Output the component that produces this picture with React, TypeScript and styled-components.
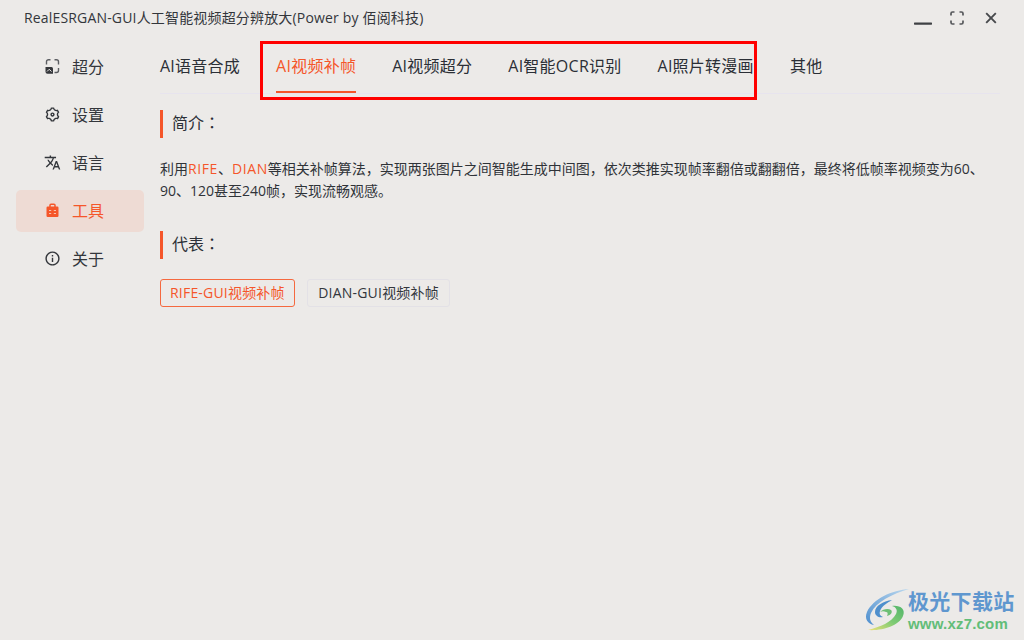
import { FC, ReactNode } from 'react';
import styled, { createGlobalStyle } from 'styled-components';
import { MdTranslate } from 'react-icons/md';
import { RiInformationLine, RiSettings3Line } from 'react-icons/ri';

const accent = '#f5562a';

const GlobalStyle = createGlobalStyle`
    html, body {
        margin: 0;
        padding: 0;
        background: #ecEAe8;
    }
    body {
        font-family: "Open Sans", "Noto Sans CJK SC", sans-serif;
        color: #2b2f36;
    }
`;

const Page = styled.div`
    position: relative;
    width: 1024px;
    height: 640px;
    overflow: hidden;
    background: #ecEAe8;
`;

const TitleBar = styled.header`
    display: flex;
    align-items: center;
    justify-content: space-between;
    height: 36px;
    padding: 0 27px 0 24px;
`;

const Title = styled.div`
    font-size: 14px;
    line-height: 32px;
    letter-spacing: 0.17px;
    color: #33363b;
`;

const WindowControls = styled.div`
    display: flex;
    align-items: center;
    gap: 18px;
`;

const WindowButton = styled.span<{ $width: number }>`
    display: block;
    width: ${(p) => p.$width}px;
    height: 16px;
    line-height: 0;
`;

const MaximizeButton = styled(WindowButton)`
    padding-top: 1px;
    height: 15px;
`;

const CloseButton = styled(WindowButton)`
    margin-left: 3px;
`;

const Body = styled.div`
    display: flex;
    padding: 7px 24px 0 16px;
`;

const Sidebar = styled.nav`
    display: flex;
    flex-direction: column;
    gap: 6px;
    width: 128px;
    flex: none;
    padding-top: 3px;
`;

const SideItem = styled.div<{ $active?: boolean }>`
    display: flex;
    align-items: center;
    gap: 11px;
    box-sizing: border-box;
    height: 42px;
    padding: 0 0 2px 28px;
    border-radius: 5px;
    font-size: 16px;
    color: ${(p) => (p.$active ? accent : '#33363b')};
    background: ${(p) => (p.$active ? '#eedbd4' : 'transparent')};
    & svg {
        flex: none;
        width: 17px;
        height: 17px;
    }
`;

const Content = styled.main`
    flex: 1;
    margin-left: 16px;
`;

const Tabs = styled.div`
    display: flex;
    gap: 36px;
    height: 50px;
    border-bottom: 1px solid #e7e4ee;
`;

const Tab = styled.div<{ $active?: boolean }>`
    height: 50px;
    box-sizing: border-box;
    font-size: 16px;
    line-height: 46px;
    letter-spacing: 0.25px;
    white-space: nowrap;
    color: ${(p) => (p.$active ? accent : '#2b2f36')};
    border-bottom: 2px solid ${(p) => (p.$active ? accent : 'transparent')};
`;

const Heading = styled.h2`
    height: 28px;
    margin: 16px 0 0;
    padding-left: 9px;
    border-left: 3px solid ${accent};
    font-size: 16px;
    font-weight: 400;
    line-height: 25px;
    color: #2b2f36;
`;

const Colon = styled.span`
    font-family: "Noto Sans CJK TC", sans-serif;
`;

const Paragraph = styled.p`
    margin: 20px 0 0;
    font-size: 14px;
    line-height: 22px;
    color: #2f3338;
`;

const Mark = styled.span`
    letter-spacing: 0.6px;
    color: ${accent};
`;

const SecondHeading = styled(Heading)`
    margin-top: 29px;
`;

const TagRow = styled.div`
    display: flex;
    gap: 12px;
    margin-top: 20px;
`;

const Tag = styled.div<{ $active?: boolean }>`
    box-sizing: border-box;
    height: 28px;
    padding: 0 ${(p) => (p.$active ? '9px' : '10.5px')};
    border: 1px solid ${(p) => (p.$active ? '#f5693f' : '#e3e1e6')};
    border-radius: 3px;
    font-size: 14px;
    line-height: 26px;
    letter-spacing: 0.2px;
    color: ${(p) => (p.$active ? accent : '#33373d')};
`;

const Annotation = styled.div`
    position: absolute;
    left: 260px;
    top: 41px;
    width: 497px;
    height: 59px;
    box-sizing: border-box;
    border: 3px solid #ff0000;
    pointer-events: none;
`;

const Watermark = styled.div`
    position: absolute;
    left: 864px;
    top: 588px;
    display: flex;
    align-items: flex-start;
    gap: 0;
`;

const WatermarkText = styled.div`
    display: flex;
    flex-direction: column;
    margin-left: -2px;
`;

const WatermarkName = styled.div`
    font-family: "Noto Sans CJK SC", sans-serif;
    font-size: 21px;
    font-weight: 700;
    line-height: 25px;
    letter-spacing: 0.3px;
    color: #5f97cf;
`;

const WatermarkUrl = styled.div`
    font-family: "Liberation Sans", Arial, sans-serif;
    font-size: 15px;
    font-weight: 700;
    line-height: 21px;
    letter-spacing: 0.2px;
    color: #62bd78;
`;

const SuperIcon = () => (
    <svg viewBox="0 0 17 17" fill="none">
        <path
            d="M6.5 1.7H4.5a2 2 0 0 0-2 2V6.5M10.5 1.7h2a2 2 0 0 1 2 2V6.5M14.5 10v2.5a2 2 0 0 1-2 2H10.5"
            stroke="#5c5e62"
            strokeWidth="1.4"
        />
        <path d="M1.5 9h6a1.5 1.5 0 0 1 1.5 1.5v5.2H3.5a2 2 0 0 1-2-2z" fill="#35373b" />
        <path d="M3 13.5l2.2-2.2 2.3 2.2" stroke="#ecEAe8" strokeWidth="1" />
    </svg>
);

const ToolboxIcon = () => (
    <svg viewBox="0 0 17 17">
        <path d="M6 5V3.3a1 1 0 0 1 1-1h3a1 1 0 0 1 1 1V5" fill="none" stroke={accent} strokeWidth="1.5" />
        <rect x="2.5" y="4.5" width="12" height="10.5" rx="1.2" fill={accent} />
        <path d="M5 8.5h2.2M9.8 8.5h2.2M5 11.5h2.2M9.8 11.5h2.2" stroke="#f6c3b0" strokeWidth="1.2" />
    </svg>
);

const MinimizeIcon = () => (
    <svg width="18" height="16" viewBox="0 0 18 16">
        <rect x="0" y="12.5" width="18" height="2.2" rx="0.6" fill="#3f4144" />
    </svg>
);

const MaximizeIcon = () => (
    <svg width="14" height="14" viewBox="0 0 14 14" fill="none" stroke="#55575a" strokeWidth="1.7">
        <path d="M1 4.5V2.5A1.5 1.5 0 0 1 2.5 1h2M9.5 1h2A1.5 1.5 0 0 1 13 2.5v2M13 9.5v2a1.5 1.5 0 0 1-1.5 1.5h-2M4.5 13h-2A1.5 1.5 0 0 1 1 11.5v-2" />
    </svg>
);

const CloseIcon = () => (
    <svg width="12" height="16" viewBox="0 0 12 16" fill="none" stroke="#47494c" strokeWidth="1.9">
        <path d="M1.2 3.2l9.6 9.6M10.8 3.2l-9.6 9.6" />
    </svg>
);

const LogoSwoosh = () => (
    <svg width="46" height="44" viewBox="0 0 46 44">
        <defs>
            <linearGradient id="swooshBlue" x1="0" y1="1" x2="1" y2="0">
                <stop offset="0" stopColor="#4e8fcf" />
                <stop offset="1" stopColor="#bcd8ee" />
            </linearGradient>
            <linearGradient id="swooshGreen" x1="0" y1="1" x2="1" y2="0">
                <stop offset="0" stopColor="#efe27a" />
                <stop offset="0.5" stopColor="#7fcb74" />
                <stop offset="1" stopColor="#52b56b" />
            </linearGradient>
        </defs>
        <path d="M45 1C28 2 9 11 3 24c-3 7 1 12 7 13-4-3-5-7-3-12C12 14 28 6 45 1z" fill="url(#swooshBlue)" />
        <path d="M28 12c-9 1-17 6-17 12 0 4 4 6 8 5-3-1-4-3-3-6 2-5 7-8 12-11z" fill="#4f8fcc" />
        <path d="M4 42c14 1 31-4 35-14 3-7-3-11-11-10 4 1 6 4 4 8-4 8-16 13-28 16z" fill="url(#swooshGreen)" />
        <path d="M16 24c3-3 8-4 11-2 2 2 0 5-4 6 1-2 1-4-1-4-2-1-4-1-6 0z" fill="#6dbf74" />
    </svg>
);

type NavEntry = { readonly label: string; readonly icon: ReactNode; readonly active?: boolean };

const navEntries: NavEntry[] = [
    { label: '超分', icon: <SuperIcon /> },
    { label: '设置', icon: <RiSettings3Line /> },
    { label: '语言', icon: <MdTranslate /> },
    { label: '工具', icon: <ToolboxIcon />, active: true },
    { label: '关于', icon: <RiInformationLine /> },
];

const tabs = ['AI语音合成', 'AI视频补帧', 'AI视频超分', 'AI智能OCR识别', 'AI照片转漫画', '其他'];

const App: FC = () => (
    <Page>
        <GlobalStyle />
        <TitleBar>
            <Title>RealESRGAN-GUI人工智能视频超分辨放大(Power by 佰阅科技)</Title>
            <WindowControls>
                <WindowButton $width={18}>
                    <MinimizeIcon />
                </WindowButton>
                <MaximizeButton $width={14}>
                    <MaximizeIcon />
                </MaximizeButton>
                <CloseButton $width={12}>
                    <CloseIcon />
                </CloseButton>
            </WindowControls>
        </TitleBar>
        <Body>
            <Sidebar>
                {navEntries.map((entry) => (
                    <SideItem key={entry.label} $active={entry.active}>
                        {entry.icon}
                        {entry.label}
                    </SideItem>
                ))}
            </Sidebar>
            <Content>
                <Tabs>
                    {tabs.map((tab) => (
                        <Tab key={tab} $active={tab === 'AI视频补帧'}>
                            {tab}
                        </Tab>
                    ))}
                </Tabs>
                <Heading>
                    简介<Colon>：</Colon>
                </Heading>
                <Paragraph>
                    利用<Mark>RIFE</Mark>、<Mark>DIAN</Mark>
                    等相关补帧算法，实现两张图片之间智能生成中间图，依次类推实现帧率翻倍或翻翻倍，最终将低帧率视频变为60、90、120甚至240帧，实现流畅观感。
                </Paragraph>
                <SecondHeading>
                    代表<Colon>：</Colon>
                </SecondHeading>
                <TagRow>
                    <Tag $active>RIFE-GUI视频补帧</Tag>
                    <Tag>DIAN-GUI视频补帧</Tag>
                </TagRow>
            </Content>
        </Body>
        <Annotation />
        <Watermark>
            <LogoSwoosh />
            <WatermarkText>
                <WatermarkName>极光下载站</WatermarkName>
                <WatermarkUrl>www.xz7.com</WatermarkUrl>
            </WatermarkText>
        </Watermark>
    </Page>
);

export default App;
